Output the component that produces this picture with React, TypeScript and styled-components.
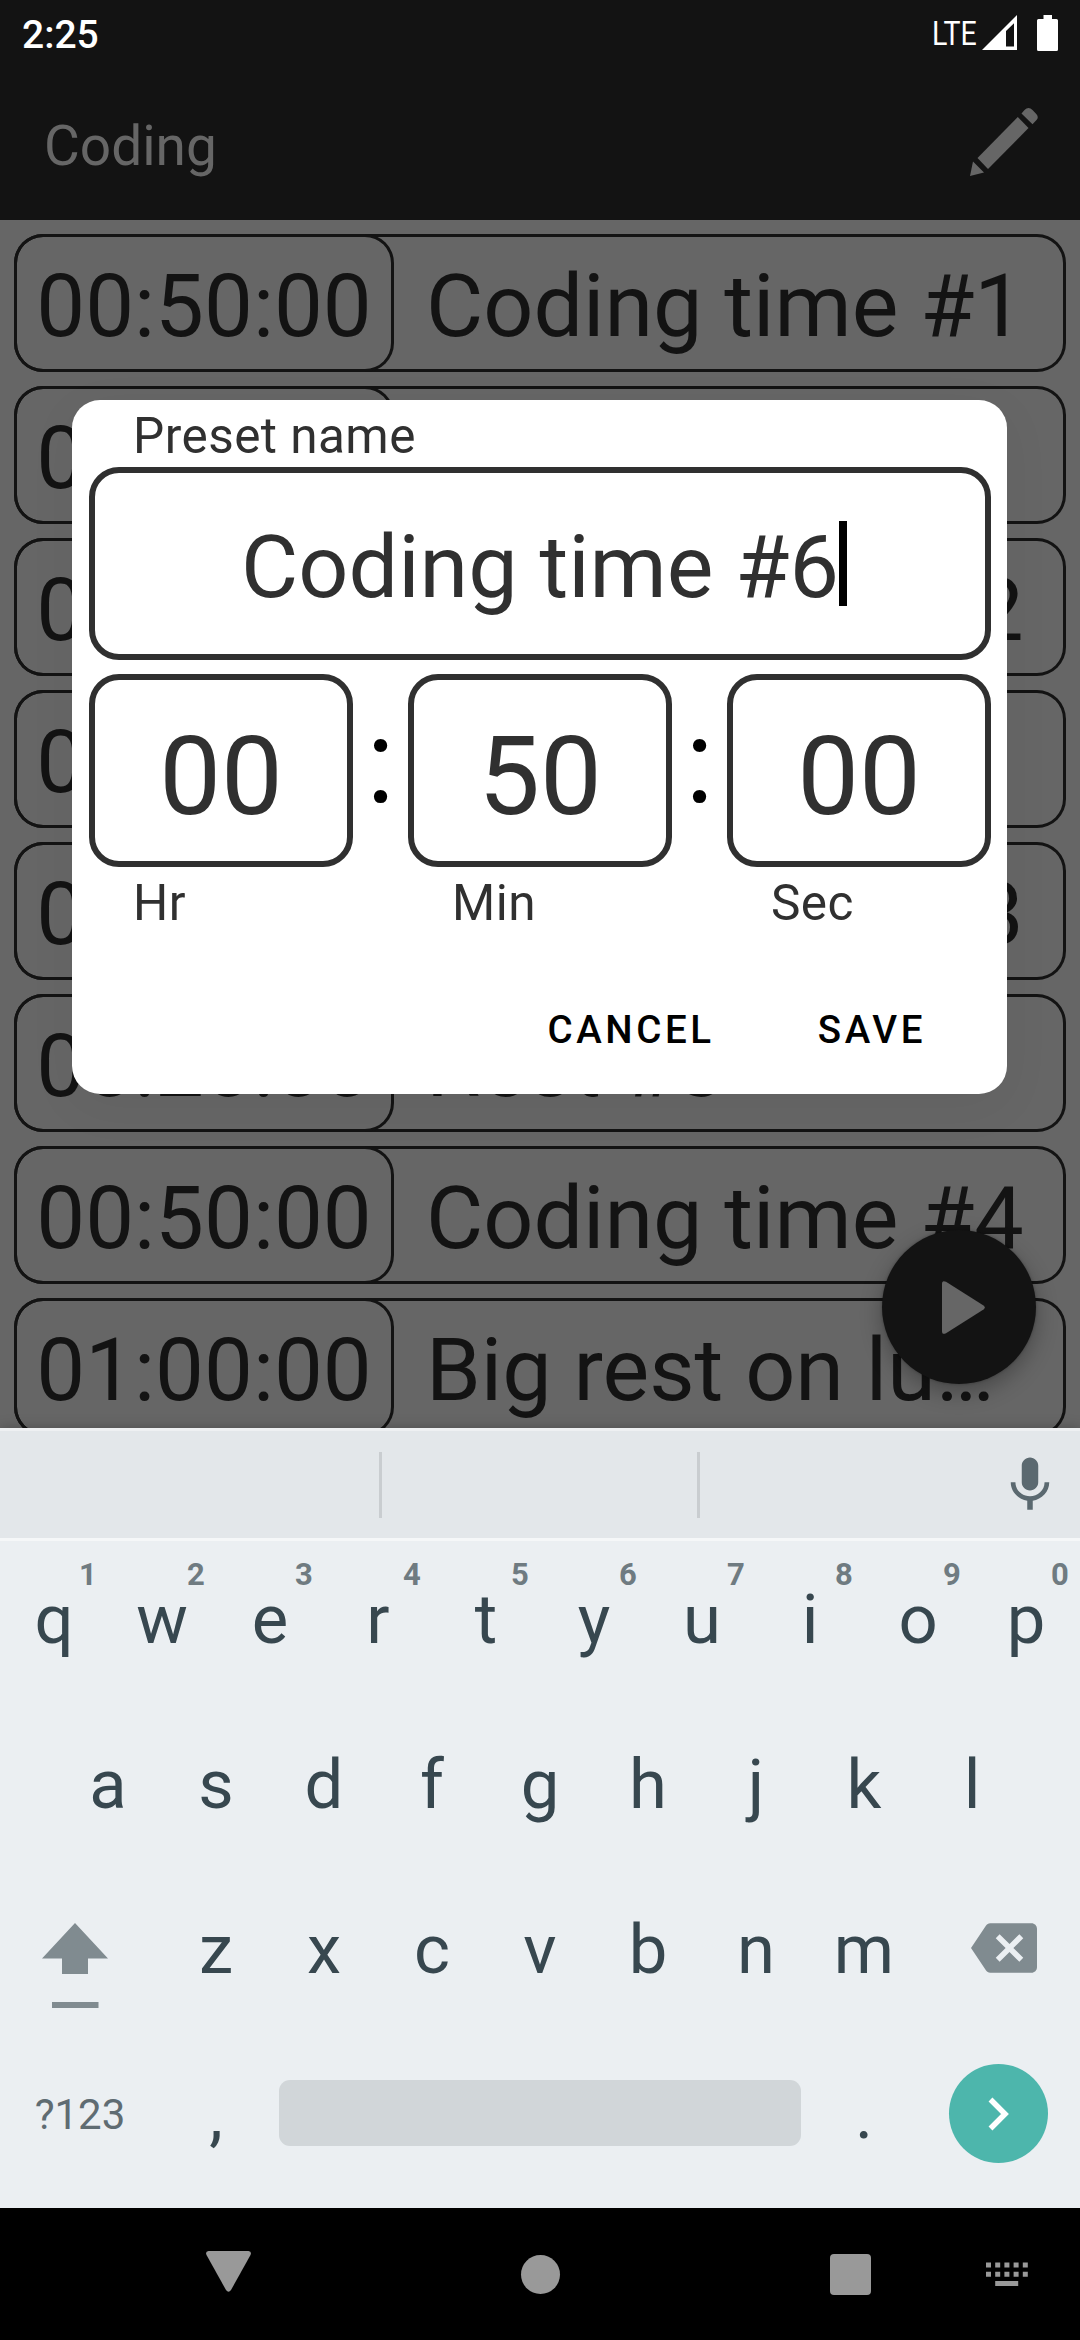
import React from "react";
import styled, { createGlobalStyle } from "styled-components";

const c = {
  dim: "#666666",
  ink: "#131313",
  dark: "#303030",
  board: "#ebeff2",
  strip: "#e3e7ea",
  key: "#37474f",
  icon: "#808b90",
  nav: "#999999",
};

const GlobalStyle = createGlobalStyle`
  *, *::before, *::after { box-sizing: border-box; }
  html, body { margin: 0; padding: 0; background: #000; }
  body { font-family: Roboto, "Noto Sans", sans-serif; }
  button { font: inherit; border: 0; background: none; padding: 0; margin: 0; }
`;

const Screen = styled.div`
  position: relative;
  display: flex;
  flex-direction: column;
  width: 1080px;
  height: 2340px;
  overflow: hidden;
`;

const StatusBar = styled.header`
  display: flex;
  align-items: center;
  height: 66px;
  padding: 3px 22px 0 22px;
  background: ${c.ink};
  color: #fff;
`;

const Clock = styled.span`
  flex: 1;
  font-size: 39px;
  font-weight: 500;
  line-height: 40px;
`;

const Network = styled.span`
  width: 47px;
  margin: 0 3px 3px 0;
  font-size: 34px;
  line-height: 36px;
  transform: scaleX(0.84);
  transform-origin: left center;
`;

const SignalIcon = styled.svg`
  width: 35px;
  height: 35px;
  margin: 0 20px 4px 0;
`;

const BatteryIcon = styled.svg`
  width: 21px;
  height: 36px;
  margin-bottom: 3px;
`;

const AppBar = styled.div`
  display: flex;
  align-items: center;
  justify-content: space-between;
  height: 154px;
  padding: 0 41px 0 44px;
  background: ${c.ink};
  color: ${c.dim};
`;

const Title = styled.h1`
  margin: 0;
  padding-top: 6px;
  font-size: 55px;
  font-weight: 400;
  line-height: 64px;
`;

const PencilIcon = styled.svg`
  width: 70px;
  height: 70px;
  margin-bottom: 2px;
  fill: ${c.dim};
`;

const List = styled.main`
  position: relative;
  display: flex;
  flex-direction: column;
  gap: 14px;
  height: 1208px;
  padding: 14px;
  overflow: hidden;
  background: ${c.dim};
  color: ${c.ink};
`;

const PresetRow = styled.div`
  display: flex;
  flex: none;
  height: 138px;
  border-radius: 29px;
  box-shadow: inset 0 0 0 3px ${c.ink};
`;

const PresetTime = styled.div`
  display: flex;
  flex: none;
  align-items: center;
  justify-content: center;
  width: 380px;
  padding-top: 5px;
  border-radius: 29px;
  box-shadow: inset 0 0 0 3px ${c.ink};
  font-size: 87px;
`;

const PresetName = styled.div`
  display: flex;
  align-items: center;
  padding: 5px 0 0 32px;
  font-size: 88px;
  white-space: nowrap;
`;

const Fab = styled.button`
  position: absolute;
  right: 44px;
  bottom: 44px;
  display: flex;
  align-items: center;
  justify-content: center;
  width: 154px;
  height: 154px;
  border-radius: 50%;
  background: ${c.ink};
  box-shadow: 0 8px 22px rgba(0, 0, 0, 0.3), 0 0 3px rgba(0, 0, 0, 0.3);
`;

const PlayIcon = styled.svg`
  width: 43px;
  height: 53px;
  margin-left: 8px;
  fill: ${c.dim};
`;

const Dialog = styled.section`
  position: absolute;
  left: 72px;
  top: 400px;
  display: flex;
  flex-direction: column;
  width: 935px;
  height: 694px;
  padding: 0 16px 0 17px;
  border-radius: 28px;
  background: #fff;
  color: ${c.dark};
  box-shadow: 0 12px 50px rgba(0, 0, 0, 0.05);
`;

const NameLabel = styled.label`
  display: flex;
  align-items: center;
  height: 67px;
  padding: 5px 0 0 44px;
  font-size: 49.5px;
  letter-spacing: 0.45px;
`;

const NameField = styled.div`
  display: flex;
  flex: none;
  align-items: center;
  justify-content: center;
  height: 193px;
  border: 6px solid ${c.dark};
  border-radius: 30px;
  font-size: 88px;
  white-space: nowrap;
`;

const NameText = styled.span`
  padding-top: 6px;
`;

const Caret = styled.span`
  width: 8px;
  height: 85px;
  margin-right: -8px;
  background: #000;
`;

const TimeFields = styled.div`
  display: flex;
  margin-top: 14px;
`;

const TimeField = styled.div`
  display: flex;
  align-items: center;
  justify-content: center;
  width: 264px;
  height: 193px;
  padding-top: 11px;
  border: 6px solid ${c.dark};
  border-radius: 30px;
  font-size: 110px;
`;

const Colon = styled.span`
  display: flex;
  align-items: center;
  justify-content: center;
  width: 55px;
  height: 193px;
  padding-bottom: 17px;
  color: #000;
  font-size: 118px;
`;

const UnitLabels = styled.div`
  display: grid;
  grid-template-columns: repeat(3, 264px);
  column-gap: 55px;
  align-items: center;
  height: 72px;
  padding-left: 44px;
  font-size: 49.5px;
  letter-spacing: 0.45px;
`;

const Actions = styled.div`
  display: flex;
  justify-content: flex-end;
  align-items: center;
  gap: 15px;
  height: 128px;
  margin-top: 26px;
  padding-right: 21px;
`;

const TextButton = styled.button`
  height: 99px;
  padding: 0 44px;
  color: #000;
  font-size: 38.5px;
  font-weight: 500;
  letter-spacing: 3.6px;
`;

const Keyboard = styled.section`
  height: 780px;
  background: ${c.board};
  color: ${c.key};
  box-shadow: 0 0 12px rgba(0, 0, 0, 0.25);
  position: relative;
`;

const Suggestions = styled.div`
  display: flex;
  align-items: center;
  height: 113px;
  border-top: 3px solid #eef0f2;
  border-bottom: 3px solid #f5f7f8;
  background: ${c.strip};
`;

const Suggestion = styled.div<{ $width: number }>`
  width: ${(p) => p.$width}px;
  height: 66px;
  border-right: 3px solid #c9cdd0;
`;

const MicIcon = styled.svg`
  width: 66px;
  height: 66px;
  margin-left: 297px;
  fill: #5b6970;
`;

const KeyRow = styled.div<{ $inset?: number }>`
  display: flex;
  height: 165px;
  padding: 0 ${(p) => p.$inset ?? 0}px;
`;

const Key = styled.div<{ $width?: number }>`
  position: relative;
  display: flex;
  align-items: center;
  justify-content: center;
  width: ${(p) => p.$width ?? 108}px;
  padding-bottom: 8px;
  font-size: 68.75px;
`;

const Hint = styled.span`
  position: absolute;
  left: 68px;
  top: 16px;
  width: 40px;
  color: #6f7b81;
  font-size: 31px;
  font-weight: 700;
  line-height: 36px;
  text-align: center;
`;

const ShiftIcon = styled.svg`
  width: 66px;
  height: 85px;
  margin: 32px 12px 0 0;
  fill: ${c.icon};
`;

const BackspaceIcon = styled.svg`
  width: 66px;
  height: 66px;
  margin: 0 0 3px 10px;
  fill: ${c.icon};
`;

const SymbolsLabel = styled.span`
  margin-right: 2px;
  color: #5f6c72;
  font-size: 42px;
`;

const Space = styled.div`
  width: 522px;
  height: 66px;
  margin: 44px 9px 0;
  border-radius: 11px;
  background: #d1d6d9;
`;

const Enter = styled.div`
  display: flex;
  align-items: center;
  justify-content: center;
  width: 99px;
  height: 99px;
  margin: 0 1px 2px 0;
  border-radius: 50%;
  background: #4db6ac;
`;

const NavBar = styled.nav`
  display: flex;
  align-items: center;
  height: 132px;
  padding-left: 206px;
  background: #000;
`;

const BackIcon = styled.svg`
  width: 45px;
  height: 41px;
  margin: 0 270px 6px 0;
  fill: ${c.nav};
`;

const HomeIcon = styled.div`
  width: 39px;
  height: 39px;
  margin-right: 270px;
  border-radius: 50%;
  background: ${c.nav};
`;

const RecentIcon = styled.div`
  width: 41px;
  height: 41px;
  margin-right: 115px;
  border-radius: 4px;
  background: ${c.nav};
`;

const SwitcherIcon = styled.svg`
  width: 42px;
  height: 24px;
  fill: ${c.nav};
`;

const presets = [
  { time: "00:50:00", name: "Coding time #1" },
  { time: "00:20:00", name: "Rest #1" },
  { time: "00:50:00", name: "Coding time #2" },
  { time: "00:20:00", name: "Rest #2" },
  { time: "00:50:00", name: "Coding time #3" },
  { time: "00:20:00", name: "Rest #3" },
  { time: "00:50:00", name: "Coding time #4" },
  { time: "01:00:00", name: "Big rest on lu…" },
];

export default function App() {
  return (
    <Screen>
      <GlobalStyle />
      <StatusBar>
        <Clock>2:25</Clock>
        <Network>LTE</Network>
        <SignalIcon viewBox="0 0 35 35">
          <path fill="#fff" fillRule="evenodd" d="M35 0V35H0ZM32 8.2 24 16V31.5H32Z" />
        </SignalIcon>
        <BatteryIcon viewBox="0 0 21 36">
          <path fill="#fff" d="M6.500 0h8.500v4h4.500q1.500 0 1.500 1.500v29q0 1.500-1.500 1.500h-18q-1.500 0-1.500-1.500v-29q0-1.500 1.500-1.500h5z" />
        </BatteryIcon>
      </StatusBar>
      <AppBar>
        <Title>Coding</Title>
        <PencilIcon viewBox="0 0 70 70">
          <path d="M52.500 6.500 55.500 3Q59.500-1 63.500 3L67.500 7.200Q70 10.500 67.500 13L63.500 17.200Z" />
          <path d="M48.800 10 59.500 21 19 62 8.500 51Z" />
          <path d="M4 54.500 15 65.500 1 69Z" />
        </PencilIcon>
      </AppBar>
      <List>
        {presets.map((p) => (
          <PresetRow key={p.name}>
            <PresetTime>{p.time}</PresetTime>
            <PresetName>{p.name}</PresetName>
          </PresetRow>
        ))}
        <Fab aria-label="Start">
          <PlayIcon viewBox="0 0 43 53">
            <path d="M0 3Q0-1.200 4 .8L41.500 24.500Q44 26.500 41.500 28.500L4 52.200Q0 54.200 0 50Z" />
          </PlayIcon>
        </Fab>
      </List>
      <Keyboard>
        <Suggestions>
          <Suggestion $width={382} />
          <Suggestion $width={318} />
          <MicIcon viewBox="0 0 24 24">
            <path d="M12 14c1.660 0 2.990-1.340 2.990-3L15 5c0-1.660-1.340-3-3-3S9 3.340 9 5v6c0 1.660 1.340 3 3 3zm5.300-3c0 3-2.540 5.100-5.300 5.100S6.700 14 6.700 11H5c0 3.410 2.720 6.230 6 6.720V21h2v-3.280c3.280-.48 6-3.300 6-6.720h-1.700z" />
          </MicIcon>
        </Suggestions>
        <KeyRow>
          {"qwertyuiop".split("").map((k, i) => (
            <Key key={k}>
              {k}
              <Hint>{(i + 1) % 10}</Hint>
            </Key>
          ))}
        </KeyRow>
        <KeyRow $inset={54}>
          {"asdfghjkl".split("").map((k) => (
            <Key key={k}>{k}</Key>
          ))}
        </KeyRow>
        <KeyRow>
          <Key $width={162}>
            <ShiftIcon viewBox="0 0 66 85">
              <path d="M33 0 66 35.500H46V51H20V35.500H0ZM10 79H56.500V85H10Z" />
            </ShiftIcon>
          </Key>
          {"zxcvbnm".split("").map((k) => (
            <Key key={k}>{k}</Key>
          ))}
          <Key $width={162}>
            <BackspaceIcon viewBox="0 0 24 24">
              <path d="M22 3H7c-.69 0-1.230.35-1.590.88L0 12l5.410 8.110c.36.53.9.89 1.590.89h15c1.100 0 2-.9 2-2V5c0-1.100-.9-2-2-2zm-3 12.590L17.590 17 14 13.410 10.410 17 9 15.590 12.590 12 9 8.410 10.410 7 14 10.590 17.590 7 19 8.410 15.410 12 19 15.590z" />
            </BackspaceIcon>
          </Key>
        </KeyRow>
        <KeyRow>
          <Key $width={162}>
            <SymbolsLabel>?123</SymbolsLabel>
          </Key>
          <Key>,</Key>
          <Space />
          <Key>.</Key>
          <Key $width={162}>
            <Enter>
              <svg width="22" height="34" viewBox="0 0 22 34">
                <path d="M2.500 2.500 17 17 2.500 31.500" fill="none" stroke="#fff" strokeWidth="5.500" />
              </svg>
            </Enter>
          </Key>
        </KeyRow>
      </Keyboard>
      <NavBar>
        <BackIcon viewBox="0 0 45 41">
          <path d="M2.500 0H42.500Q46 .5 44.500 4L25 39Q22.500 42.500 20 39L.5 4Q-1 .5 2.500 0Z" />
        </BackIcon>
        <HomeIcon />
        <RecentIcon />
        <SwitcherIcon viewBox="0 0 42 24">
          {[0, 9.2, 18.4, 27.600, 36.800].map((x) => (
            <path key={x} d={`M${x} 0.500h5v5h-5zM${x} 9.800h5v5h-5z`} />
          ))}
          <path d="M9.200 19h23v5h-23z" />
        </SwitcherIcon>
      </NavBar>
      <Dialog>
        <NameLabel>Preset name</NameLabel>
        <NameField>
          <NameText>Coding time #6</NameText>
          <Caret />
        </NameField>
        <TimeFields>
          <TimeField>00</TimeField>
          <Colon>:</Colon>
          <TimeField>50</TimeField>
          <Colon>:</Colon>
          <TimeField>00</TimeField>
        </TimeFields>
        <UnitLabels>
          <span>Hr</span>
          <span>Min</span>
          <span>Sec</span>
        </UnitLabels>
        <Actions>
          <TextButton>CANCEL</TextButton>
          <TextButton>SAVE</TextButton>
        </Actions>
      </Dialog>
    </Screen>
  );
}
